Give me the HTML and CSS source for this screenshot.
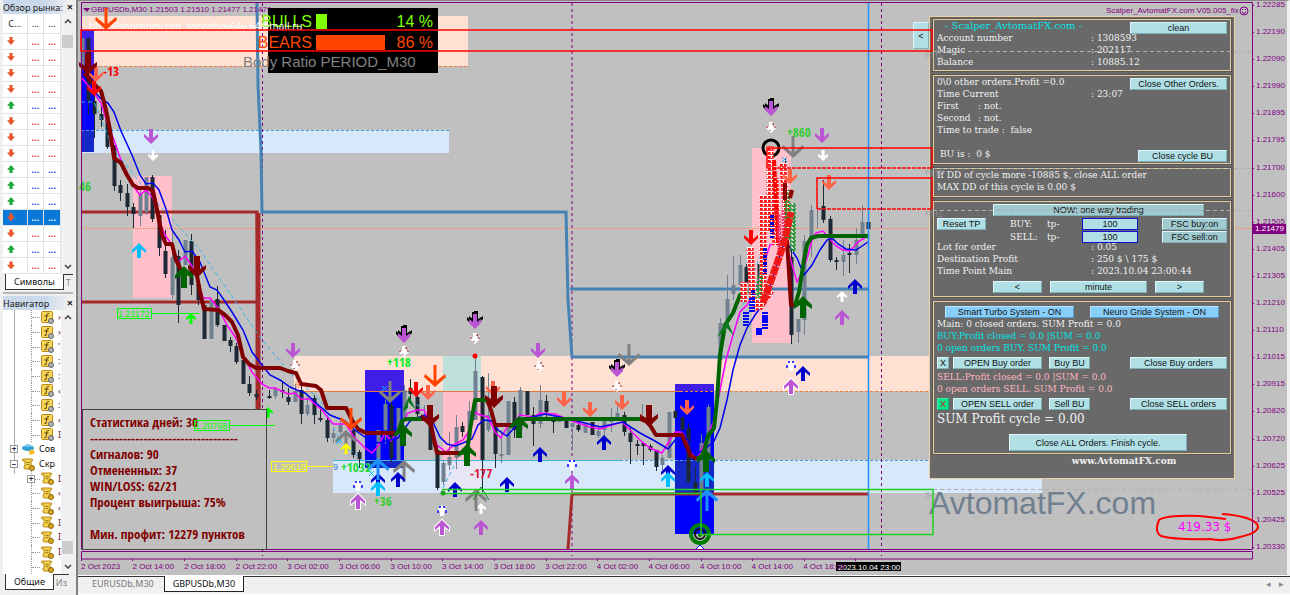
FILE: index.html
```
<!DOCTYPE html>
<html lang="ru">
<head>
<meta charset="utf-8">
<title>GBPUSDb,M30</title>
<link rel="stylesheet" href="styles.css">
</head>
<body>
<svg class="defs" width="0" height="0" aria-hidden="true">
  <defs>
    <path id="up" d="M0 0L7 7V10L2 6V15H-2V6L-7 10V7Z"/>
    <path id="dn" d="M0 0L7 -7V-10L2 -6V-15H-2V-6L-7 -10V-7Z"/>
    <path id="fatup" d="M0 0L9 9V13L3 9V22H-3V9L-9 13V9Z"/>
    <path id="fatdn" d="M0 0L9 -9V-13L3 -9V-22H-3V-9L-9 -13V-9Z"/>
    <path id="bigup" d="M0 0L11 10L10 13L1.500 6V22H-1.500V6L-10 13L-11 10Z"/>
    <path id="bigdn" d="M0 0L11 -10L10 -13L1.500 -6V-22H-1.500V-6L-10 -13L-11 -10Z"/>
    <path id="smup" d="M0 0L5 5V7L1.500 5V11H-1.500V5L-5 7V5Z"/>
    <path id="smdn" d="M0 0L5 -5V-7L1.500 -5V-11H-1.500V-5L-5 -7V-5Z"/>
    <g id="twodn"><use href="#dn" x="1" y="-2" fill="#000"/><use href="#dn" x="-1" y="-1" fill="#000"/><path d="M0 1L6 -5V-9L2 -6V-14H-2V-6L-6 -9V-5Z" fill="#ba55d3"/></g>
    <g id="sparkdn"><path d="M0 0L5 -5V-8L2 -6V-11H-2V-6L-5 -8V-5Z" fill="#fff"/><path d="M-4 -7v2M4 -7v2M-1 -3v1M2 -10v2" stroke="#800000"/></g>
    <g id="sparkup"><path d="M0 0L5 5V8L2 6V11H-2V6L-5 8V5Z" fill="#fff"/><path d="M-2 1v2M2 1v2M-4 5v3M4 5v3" stroke="#00f" stroke-width="1.500"/></g>
    <g id="fn"><rect x=".5" y=".5" width="11" height="11" rx="1" fill="#f6d65a" stroke="#b98a16"/><path d="M8 2.500c-3-.5-2 2-3 7H3.500M3.500 5h4" fill="none" stroke="#5a4000"/><circle cx="10" cy="10" r="2.500" fill="#b0b0b0" stroke="#666"/></g>
    <g id="scroll"><path d="M1 1h9c1 0 1 2 0 2H9v5h2c1 0 1 3 0 3H3c-1 0-1-2-1-3h1V3H1C0 3 0 1 1 1z" fill="#f2cf4e" stroke="#b98a16"/><path d="M4.500 4.500h3M4.500 6.500h3" stroke="#a87b10"/><circle cx="10" cy="10" r="2.500" fill="#d9a520" stroke="#8a6610"/></g>
    <pattern id="hatch" width="4" height="4" patternUnits="userSpaceOnUse"><rect width="4" height="4" fill="#fff"/><path d="M1 0v3M0 1h3M3 2v1" stroke="#f00" stroke-width="1.500"/></pattern>
    <pattern id="hatchgreen" width="4" height="4" patternUnits="userSpaceOnUse"><path d="M0 4L4 0" stroke="#fff"/><path d="M0 2h2v2M3 0v2" fill="none" stroke="#109020" stroke-width="1.500"/></pattern>
  </defs>
</svg>
<div class="terminal">
  <aside class="sidebar">
    <section class="dock market">
      <header class="dock-head"><h2>Обзор рынка:</h2><button class="close" aria-label="Закрыть">×</button></header>
      <div class="dock-body">
        <table class="quotes">
          <thead><tr><th>С...</th><th>...</th><th>...</th></tr></thead>
          <tbody>
            <tr class="down"><td><i></i></td><td>...</td><td>...</td></tr>
            <tr class="down"><td><i></i></td><td>...</td><td>...</td></tr>
            <tr class="down"><td><i></i></td><td>...</td><td>...</td></tr>
            <tr class="down"><td><i></i></td><td>...</td><td>...</td></tr>
            <tr class="rise"><td><i></i></td><td>...</td><td>...</td></tr>
            <tr class="down"><td><i></i></td><td>...</td><td>...</td></tr>
            <tr class="down"><td><i></i></td><td>...</td><td>...</td></tr>
            <tr class="down"><td><i></i></td><td>...</td><td>...</td></tr>
            <tr class="rise"><td><i></i></td><td>...</td><td>...</td></tr>
            <tr class="rise"><td><i></i></td><td>...</td><td>...</td></tr>
            <tr class="rise"><td><i></i></td><td>...</td><td>...</td></tr>
            <tr class="down selected"><td><i></i></td><td>...</td><td>...</td></tr>
            <tr class="down"><td><i></i></td><td>...</td><td>...</td></tr>
            <tr class="rise"><td><i></i></td><td>...</td><td>...</td></tr>
            <tr class="down"><td><i></i></td><td>...</td><td>...</td></tr>
          </tbody>
        </table>
        <div class="scroll top"><svg width="8" height="5"><path d="M1 4l3-3 3 3"/></svg><span class="thumb"></span><svg width="8" height="5"><path d="M1 1l3 3 3-3"/></svg></div>
      </div>
      <nav class="dock-tabs"><a class="on" href="#">Символы</a><a href="#">Т</a></nav>
    </section>
    <section class="dock navigator">
      <header class="dock-head"><h2>Навигатор</h2><button class="close" aria-label="Закрыть">×</button></header>
      <div class="dock-body">
        <ul class="tree">
          <li class="leaf"><svg class="ic"><use href="#fn"/></svg>›</li>
          <li class="leaf"><svg class="ic"><use href="#fn"/></svg>›</li>
          <li class="leaf"><svg class="ic"><use href="#fn"/></svg>'</li>
          <li class="leaf"><svg class="ic"><use href="#fn"/></svg>:</li>
          <li class="leaf"><svg class="ic"><use href="#fn"/></svg>:</li>
          <li class="leaf"><svg class="ic"><use href="#fn"/></svg>‹</li>
          <li class="leaf"><svg class="ic"><use href="#fn"/></svg>:</li>
          <li class="leaf"><svg class="ic"><use href="#fn"/></svg>‹</li>
          <li class="leaf"><svg class="ic"><use href="#fn"/></svg>I</li>
          <li class="node"><b>+</b><svg class="ic"><ellipse cx="6" cy="5" rx="6" ry="3" fill="#2f9fd0"/><path d="M2 4q4-6 8 0z" fill="#6cc8ec"/><path d="M6 7l4 4-2 1z" fill="#f0b000"/><circle cx="10" cy="9" r="2.500" fill="#f0c030"/></svg>Сов</li>
          <li class="node"><b>−</b><svg class="ic"><use href="#scroll"/></svg>Скр</li>
          <li class="leaf sub"><b>+</b><svg class="ic"><use href="#scroll"/></svg>I</li>
          <li class="leaf"><svg class="ic"><use href="#scroll"/></svg>‹</li>
          <li class="leaf"><svg class="ic"><use href="#scroll"/></svg>‹</li>
          <li class="leaf"><svg class="ic"><use href="#scroll"/></svg>I</li>
          <li class="leaf"><svg class="ic"><use href="#scroll"/></svg>I</li>
          <li class="leaf"><svg class="ic"><use href="#scroll"/></svg>I</li>
          <li class="leaf"><svg class="ic"><use href="#scroll"/></svg></li>
        </ul>
        <div class="scroll low"><svg width="8" height="5"><path d="M1 4l3-3 3 3"/></svg><span class="thumb"></span><svg width="8" height="5"><path d="M1 1l3 3 3-3"/></svg></div>
      </div>
      <nav class="dock-tabs"><a class="on" href="#">Общие</a><a href="#">Из</a></nav>
    </section>
  </aside>

  <main class="work">
    <div class="chart">
      <svg class="layer" viewBox="78 0 1212 576" preserveAspectRatio="xMinYMin meet">
        <!-- price zones -->
        <path fill="#ffe1d3" d="M81 16H468V66H81zM294 356H935V391H294z"/>
        <path fill="#d6e8f9" d="M81 130H449V153H81zM333 460H1042V493H333z"/>
        <path fill="#ffc0cb" d="M133 176H172V298H133zM443 391H481V460H443zM752 148H791V343H752z"/>
        <path fill="#bfe0da" d="M443 356H481V391H443z"/>
        <path fill="#e8e6f4" d="M443 460H481V493H443z"/>
        <path fill="#00f" d="M81 30H94V152H81zM365 370H404V468H365zM675 384H714V534H675z"/>
        <path fill="#3f1ee8" d="M81 30H94V66H81zM365 370H404V391H365zM675 384H714V391H675z"/>
        <path fill="#1428c8" d="M81 130H94V152H81zM365 460H404V468H365zM675 460H714V493H675z"/>
        <path stroke="#f58040" stroke-dasharray="3 2" fill="none" d="M94 66.500H468M680 391.500H929"/>
        <path stroke="#e07840" fill="none" d="M294 391.500H680"/>
        <path stroke="#4a9ee0" stroke-dasharray="3 2" fill="none" d="M81 130.500H449M580 460.500H929"/>
        <path stroke="#3cb4e0" fill="none" d="M333 460.500H620"/>
        <path stroke="#800080" stroke-dasharray="3 3" fill="none" d="M262.500 3V556M572 3V556M881.500 3V556"/>
        <path stroke="#f0a080" fill="none" d="M81 228.500H929M1234 228.500H1252"/>
        <!-- channel levels -->
        <path stroke="#4682b4" stroke-width="3" fill="none" d="M257 3L258 86L261 150L262 212H566L568 300L572 357H869M570 289H869"/>
        <path stroke="#a52a2a" stroke-width="3" fill="none" d="M81 212H257L259 409M81 302H257M568 549L572 494H869"/>
        <path stroke="#a52a2a" stroke-width="5" d="M258 213V409"/>
        <!-- candles -->
        <path stroke="#1c2833" fill="none" d="M88.500 38V115M94.500 88V138M101.500 106V127M107.500 118V149M114.500 145V191M120.500 180V201M127.500 184V216M133.500 203V228M152.500 175V222M159.500 212V256M165.500 230V278M178.500 250V323M191.500 234V295M198.500 280V305M217.500 286V327M230.500 337V352M236.500 343V364M249.500 376V396M256.500 390V400M269.500 390V399M282.500 382V398M288.500 388V405M301.500 386V424M314.500 395V424M320.500 407V422M327.500 418V442M353.500 425V458M359.500 450V468M391.500 400V462M410.500 379V400M417.500 395V420M437.500 445V490M462.500 422V437M482.500 376V492M495.500 420V468M514.500 397V438M533.500 407V446M546.500 395V417M553.500 417V433M578.500 420V432M624.500 412V436M630.500 427V464M637.500 440V455M643.500 445V465M650.500 444V452M656.500 450V471M688.500 423V483M695.500 467V492M746.500 264V284M785.500 158V200M791.500 250V344M823.500 180V223M830.500 216V262M836.500 257V270M849.500 244V273"/>
        <path stroke="#1c2833" stroke-width="4" fill="none" d="M88.500 38V101M94.500 101V114M101.500 114V120M107.500 120V147M114.500 145V186M120.500 185V193M127.500 193V207M133.500 207V214M152.500 177V219M159.500 215V248M165.500 251V274M178.500 256V305M191.500 241V285M198.500 284V300M204.500 305V339M217.500 299V325M224.500 325V341M230.500 340V346M236.500 346V362M243.500 360V384M249.500 384V393M256.500 394V397M269.500 396V398M282.500 390V392M288.500 397V402M301.500 390V414M314.500 398V415M320.500 418V420M327.500 420V438M353.500 430V455M359.500 452V459M372.500 462V464M391.500 405V458M410.500 388V394M417.500 397V414M430.500 415V450M437.500 450V488M462.500 426V432M482.500 377V460M495.500 424V454M514.500 402V430M527.500 391V415M533.500 415V424M546.500 401V412M553.500 419V422M566.500 419V428M578.500 425V430M592.500 422V435M624.500 415V432M630.500 433V442M637.500 444V446M643.500 443V446M650.500 446V450M656.500 450V467M675.500 411V418M682.500 417V430M688.500 428V482M695.500 482V492M746.500 267V284M759.500 264V277M791.500 257V335M823.500 206V220M830.500 219V260M836.500 260V262M849.500 253V255M868.500 222V229"/>
        <path stroke="#708090" fill="none" d="M140.500 190V226M146.500 177V215M172.500 232V299M275.500 387V399M295.500 384V402M307.500 395V416M333.500 429V443M340.500 420V434M385.500 400V444M404.500 385V420M424.500 405V420M443.500 460V485M449.500 432V470M456.500 415V469M469.500 401V445M475.500 357V420M488.500 373V432M501.500 430V463M520.500 387V430M540.500 385V428M572.500 423V449M598.500 425V438M604.500 418V440M611.500 408V432M617.500 404V420M642.500 404V415M662.500 455V470M701.500 434V492M708.500 404V460M720.500 318V360M727.500 275V320M733.500 256V300M740.500 255V285M798.500 319V343M804.500 235V335M811.500 205V257M817.500 206V228M843.500 240V276M856.500 228V264M862.500 205V236"/>
        <path stroke="#708090" stroke-width="4" fill="none" d="M82.500 38V67M140.500 193V216M146.500 177V212M172.500 257V295M185.500 240V265M211.500 300V339M275.500 389V396M295.500 391V402M307.500 405V414M333.500 433V438M340.500 425V432M378.500 430V460M385.500 404V430M398.500 408V460M404.500 390V420M443.500 463V482M449.500 457V465M456.500 427V458M469.500 411V440M475.500 371V420M488.500 415V430M501.500 454V456M508.500 401V455M520.500 390V430M540.500 400V424M559.500 418V422M572.500 423V427M585.500 424V433M598.500 431V436M604.500 421V430M611.500 420V422M617.500 413V418M662.500 458V465M669.500 412V458M701.500 443V490M708.500 407V460M720.500 323V360M727.500 299V320M733.500 285V294M740.500 265V285M798.500 319V332M804.500 241V320M811.500 210V240M843.500 255V262M856.500 240V255M862.500 222V235"/>
        <!-- indicators -->
        <path stroke="#30b8e8" stroke-dasharray="4 3" fill="none" d="M81 102H94L114 150L150 195L200 250L262 340L290 373L320 400L340 440L372 470M410 402L424 408M443 488L456 462L467 448M714 420L726 360L733 335L745 300L760 255L770 220"/>
        <path stroke="#f0f" stroke-width="1.500" fill="none" d="M81 77L92 90L101 103L108 125L114 140L121 160L128 178L134 187L140 195L146 190L153 198L159 220L165 235L172 245L178 262L185 256L192 266L198 280L203 298H210L218 308L227 325L236 338L243 355L252 372L262 384L269 388H275L288 394L295 393L301 399H309L322 410L333 424H346L354 437L365 448L372 453L378 446L385 433L391 441L400 428L408 413L417 410H424L428 418L433 430L437 445L446 452L455 444L463 440L470 430L475 412L480 415L488 417L495 432L501 438L508 425L514 423L520 415L534 417L540 413L555 414L572 421L590 427L600 429L612 425L622 422L630 430L640 440L650 448L662 453L670 440L675 432H681L684 435L690 452L697 459L706 440L714 420L720 390L726 360L733 335L740 312L747 305L757 285L770 245L785 240L797 282L803 270L808 255L812 240L816 233L823 231L829 238L836 246L843 250L850 251L858 242L866 237"/>
        <path stroke="#0000f0" stroke-width="1.500" fill="none" d="M92 88L100 98L108 103L114 112L121 131L132 155L140 175L146 184L153 183L159 190L166 209L172 230L179 240L185 252L192 251L200 262L210 287L217 290L224 300L232 312L243 330L252 352L262 365L270 375L280 380L290 387L297 390L305 393L315 402L330 415L345 421L352 428L365 437L378 443L398 438L410 421L424 415L432 420L440 437L447 444L455 446L463 443L472 439L478 425L484 420L492 421L498 430L507 436L514 428L525 419L545 414L560 417L585 423L600 427L623 422L640 433L655 441L668 449L680 434L688 440L696 455L706 448L714 441L720 428L727 400L733 370L740 345L747 328L755 315L766 300L775 270L785 240L797 258L804 275L812 265L820 250L827 240L832 238L838 244L846 249L856 250L868 242"/>
        <g fill="none" stroke-width="4" stroke-linejoin="round">
          <path stroke="#800000" d="M84 73L92 82L101 91L106 110L110 130L114 158L121 163L127 175L133 185L138 188H148L153 191L157 210L162 235L166 244H172L176 260L181 270M196 270L200 292L204 309L218 310L225 315L232 322L238 335L243 357L249 364L256 368H280L288 371L296 373L301 384L316 386L321 390L327 408H346L352 420L358 429L366 433H398M422 419H430L434 440L437 453H462M487 400L491 410L495 425H515M640 419L648 422L656 435H682L686 445L691 456L697 459M785 185L787 240L791 305H795"/>
          <path stroke="#006400" d="M398 433L402 421L406 419H422M462 453L467 452L470 430L475 400H487M515 425L519 420L524 419H640M697 459L703 455L708 436L714 428L717 400L720 355L725 325L733 313L740 295L748 291M795 305L799 292L804 260L807 245L811 238L818 236H869"/>
        </g>
        <!-- dense trade marks around the peak -->
        <circle cx="771" cy="148" r="8" fill="none" stroke="#000" stroke-width="3"/>
        <g fill="none">
          <path stroke="url(#hatch)" stroke-width="7" d="M744.100 282L744 302M750 247L753 300L758 310M763.100 195L763 300M770.100 146L770 232M783 163L788 240"/>
          <path stroke="url(#hatch)" stroke-width="9" d="M758 308L770 290M774 178L777 245"/>
          <path stroke="url(#hatchgreen)" stroke-width="6" d="M793.100 203L793 252M787 190L788 240M760 275L758 298"/>
          <path stroke="#f00" stroke-width="4" stroke-dasharray="6 1 3 1" d="M774 160L778 245"/>
          <path stroke="#00c" stroke-width="4" stroke-dasharray="3 1 1 2" d="M772 215V238M765 248V275M753 290V300"/>
          <path stroke="#00f" stroke-width="6" stroke-dasharray="2 1" d="M746 312V327M765 312V330M752 298V312"/>
          <path stroke="#00f" stroke-width="6" d="M759 328V335M765 317V322"/>
          <path stroke="#f04080" stroke-width="3" stroke-dasharray="2 1" d="M779 215V250M783 210V240"/>
          <path stroke="#f01818" stroke-width="7" stroke-dasharray="9 1" d="M763 303L772 278L784 243L791 212"/>
          <path stroke="#8b0000" stroke-width="4" d="M785 183V200M790 198L792 190"/>
        </g>
        <!-- signal arrows -->
        <g fill="#ba55d3">
          <use href="#dn" x="151" y="144"/><use href="#dn" x="293" y="358"/><use href="#dn" x="538" y="358"/><use href="#dn" x="822" y="143"/>
          <use href="#up" x="481" y="520"/><use href="#up" x="572" y="474"/><use href="#up" x="842" y="310"/>
        </g>
        <g fill="#ba55d3" stroke="#fff" stroke-width="2" paint-order="stroke"><use href="#up" x="358" y="494"/><use href="#up" x="442" y="520"/><use href="#up" x="791" y="379"/></g>
        <use href="#twodn" x="404" y="342"/><use href="#twodn" x="475" y="328"/><use href="#twodn" x="617" y="376"/><use href="#twodn" x="771" y="115"/>
        <g fill="#fff"><use href="#smdn" x="153" y="161"/><use href="#smdn" x="823" y="161"/><use href="#smup" x="481" y="503"/><use href="#smup" x="842" y="291"/></g>
        <use href="#sparkdn" x="295" y="371"/><use href="#sparkdn" x="404" y="357"/><use href="#sparkdn" x="475" y="344"/><use href="#sparkdn" x="539" y="372"/><use href="#sparkdn" x="617" y="392"/><use href="#sparkdn" x="771" y="133"/>
        <use href="#sparkup" x="358" y="480"/><use href="#sparkup" x="442" y="505"/><use href="#sparkup" x="572" y="459"/><use href="#sparkup" x="791" y="360"/>
        <path d="M696 549L700 545L704 549" fill="#fff" stroke="#00f"/>
        <g fill="#ff4500"><use href="#bigdn" x="351" y="430"/><use href="#bigdn" x="435" y="387"/></g>
        <g fill="#808080"><use href="#bigdn" x="390" y="403"/><use href="#bigdn" x="629" y="366"/><use href="#bigdn" x="793" y="158"/><use href="#bigup" x="346" y="430"/><use href="#bigup" x="404" y="460"/><use href="#bigup" x="476" y="489"/></g>
        <g fill="#ff6347"><use href="#dn" x="96" y="82"/><use href="#dn" x="428" y="400"/><use href="#dn" x="493" y="396"/><use href="#dn" x="564" y="407"/><use href="#dn" x="590" y="417"/><use href="#dn" x="622" y="410"/><use href="#dn" x="687" y="415"/><use href="#dn" x="790" y="184"/><use href="#dn" x="829" y="190"/></g>
        <g fill="#f00"><use href="#dn" x="94" y="96"/><use href="#dn" x="416" y="397"/><use href="#dn" x="751" y="245"/></g>
        <g fill="#800000"><use href="#fatdn" x="88" y="75"/><use href="#fatdn" x="197" y="278"/><use href="#fatdn" x="430" y="427"/><use href="#fatdn" x="494" y="408"/><use href="#fatdn" x="649" y="427"/></g>
        <g fill="#006400"><use href="#fatup" x="184" y="266"/><use href="#fatup" x="403" y="424"/><use href="#fatup" x="467" y="444"/><use href="#fatup" x="519" y="416"/><use href="#fatup" x="803" y="296"/><use href="#fatup" x="706" y="450"/></g>
        <path fill="#107820" d="M409 396L402 412L408 408V402L416 410zM727 320L717 337L726 330V327L734 336z"/>
        <path fill="none" stroke="#107820" d="M481 487L473 500M481 487L489 500"/>
        <g fill="#0000cd"><use href="#up" x="378" y="473"/><use href="#up" x="398" y="472"/><use href="#up" x="455" y="482"/><use href="#up" x="507" y="477"/><use href="#up" x="540" y="447"/><use href="#up" x="604" y="435"/><use href="#up" x="668" y="465"/><use href="#up" x="803" y="366"/><use href="#up" x="855" y="279"/></g>
        <g fill="#00bfff"><use href="#up" x="139" y="243"/><use href="#up" x="378" y="481"/><use href="#up" x="668" y="472"/><use href="#up" x="707" y="472"/></g>
        <g fill="#1e90ff"><use href="#bigup" x="378" y="458"/><use href="#bigup" x="707" y="489"/></g>
        <g fill="#0f0"><use href="#smup" x="191" y="313"/><use href="#smup" x="268" y="407"/></g>
        <use href="#smup" x="346" y="443" fill="#ff0"/>
        <path stroke="#00bfff" fill="none" d="M382 386l5 5m-5 0l5-5M336 439l5 5m-5 0l5-5M369 471l5 5m-5 0l5-5M782 157l5 5m-5 0l5-5"/>
        <circle cx="475" cy="356" r="2.500" fill="#f00"/>
        <circle cx="700" cy="534" r="9" fill="none" stroke="#008000" stroke-width="4"/>
        <circle cx="700" cy="534" r="5" fill="none" stroke="#111" stroke-width="2"/>
        <circle cx="700" cy="535" r="2" fill="#008000"/>
        <path stroke="#1e90ff" stroke-width="1.500" d="M868.500 3V549"/>
        <!-- labels -->
        <g class="impact">
          <text x="103" y="76" fill="#f00">-13</text><text x="79" y="191" fill="#32cd32">46</text>
          <text x="387" y="367" fill="#0e2">+118</text><text x="341" y="472" fill="#2d3">+1032</text><text x="374" y="506" fill="#32cd32">+36</text>
          <text x="470" y="478" fill="#dc143c">-177</text><text x="787" y="137" fill="#32cd32">+860</text>
        </g>
        <g class="tag"><text x="333" y="470" fill="#4682b4">9</text><text x="295" y="388" fill="#ff8040">8</text></g>
        <g class="tag">
          <text x="118" y="317" fill="#0f0">1.21172</text><path stroke="#0f0" fill="none" d="M117.500 308.500H151.500V318.500H117.500zM151 313.500H199"/>
          <text x="273" y="470" fill="#ff0">1.20618</text><path stroke="#ff0" fill="none" d="M271.500 461.500H306.500V471.500H271.500zM306 466.500H333"/>
        </g>
        <!-- frames -->
        <path fill="none" stroke="#800080" d="M81.500 549V2.500H1252.500V549.500H81.500M81.500 551.500H1252.500V559H81.500z"/>
        <path fill="none" stroke="#800080" d="M81.500 559v2M132.500 559v2M184.500 559v2M236.500 559v2M287.500 559v2M339.500 559v2M391.500 559v2M442.500 559v2M494.500 559v2M546.500 559v2M597.500 559v2M649.500 559v2M701.500 559v2M752.500 559v2M804.500 559v2M855.500 559v2"/>
        <path fill="#800080" d="M83 8h7l-3 4z"/>
        <text class="small" x="91" y="12">GBPUSDb,M30</text><text class="small" x="149" y="12">1.21503 1.21510 1.21477 1.21479</text>
        <text class="small" x="1106" y="13">Scalper_AvtomatFX.com V05.005_fix</text>
        <g fill="none" stroke="#800080"><circle cx="1244" cy="11" r="4"/><path d="M1242 12q2 3 4 0M1242.500 9v1M1245.500 9v1"/></g>
        <text class="mark" x="929" y="514">AvtomatFX.com</text>
        <text class="profit" x="1178" y="531">419.33 $</text>
        <path fill="none" stroke="#f00" stroke-width="2" d="M1222 514Q1250 516 1257 524Q1262 532 1240 537Q1225 542 1210 539Q1175 540 1161 536Q1154 532 1159 520Q1166 515 1200 516L1226 519"/>
      </svg>

      <dl class="ratio">
        <div class="bulls"><dt>BULLS</dt><dd><span class="bar" style="width:14%"></span></dd><dd>14 %</dd></div>
        <div class="bears"><dt>BEARS</dt><dd><span class="bar" style="width:86%"></span></dd><dd>86 %</dd></div>
        <p>Body Ratio PERIOD_M30</p>
      </dl>

      <section class="stats">
        <p>Статистика дней: 30</p>
        <p>------------------------------------</p>
        <p>Сигналов: 90</p>
        <p>Отмененных: 37</p>
        <p>WIN/LOSS: 62/21</p>
        <p>Процент выигрыша: 75%</p>
        <p class="last">Мин. профит: 12279 пунктов</p>
      </section>

      <section class="expert">
        <button class="btn fold">&lt;</button>
        <div class="box">
          <div class="row head"><h1>- Scalper_AvtomatFX.com -</h1><button class="btn w96">clean</button></div>
          <div class="row pair"><span>Account number</span><span>: 1308593</span></div>
          <div class="row pair"><span>Magic</span><span>: 202117</span></div>
          <div class="row pair"><span>Balance</span><span>: 10885.12</span></div>
        </div>
        <div class="box loose">
          <div class="row head"><span>0\0 other orders.Profit =0.0</span><button class="btn w96">Close Other Orders.</button></div>
          <div class="row pair"><span>Time Current</span><span>: 23:07</span></div>
          <div class="row key"><span>First</span><span>: not.</span></div>
          <div class="row key"><span>Second</span><span>: not.</span></div>
          <div class="row"><span>Time to trade :&nbsp; false</span></div>
          <div class="row"></div>
          <div class="row head"><span class="indent">BU is :&nbsp; 0 $</span><button class="btn w88">Close cycle BU</button></div>
        </div>
        <div class="box loose">
          <div class="row">If DD of cycle more -10885 $, close ALL order</div>
          <div class="row">MAX DD of this cycle is 0.00 $</div>
        </div>
        <div class="box loose">
          <button class="btn now">NOW: one way trading</button>
          <div class="controls">
            <button class="btn">Reset TP</button><label for="tpb">BUY:</label><label for="tpb">tp-</label><input id="tpb" value="100"><button class="btn dim">FSC buy:on</button>
            <label for="tps" class="second">SELL:</label><label for="tps">tp-</label><input id="tps" value="100"><button class="btn dim">FSC sell:on</button>
          </div>
          <div class="row pair"><span>Lot for order</span><span>: 0.05</span></div>
          <div class="row pair"><span>Destination Profit</span><span>: 250 $ \ 175 $</span></div>
          <div class="row pair"><span>Time Point Main</span><span>: 2023.10.04 23:00:44</span></div>
          <div class="stepper"><button class="btn">&lt;</button><button class="btn">minute</button><button class="btn">&gt;</button></div>
        </div>
        <div class="box cycle">
          <div class="systems"><button class="btn blue">Smart Turbo System - ON</button><button class="btn blue">Neuro Gride System - ON</button></div>
          <div class="row">Main: 0 closed orders. SUM Profit = 0.0</div>
          <div class="row aqua">BUY:Profit closed = 0.0 |SUM = 0.0</div>
          <div class="row aqua">0 open orders BUY. SUM Profit = 0.0</div>
          <div class="actions"><button class="btn">X</button><button class="btn">OPEN Buy order</button><button class="btn">Buy BU</button><button class="btn close-all">Close Buy orders</button></div>
          <div class="row rose">SELL:Profit closed = 0.0 |SUM = 0.0</div>
          <div class="row rose">0 open orders SELL. SUM Profit = 0.0</div>
          <div class="actions"><button class="btn live">X</button><button class="btn">OPEN SELL order</button><button class="btn">Sell BU</button><button class="btn close-all">Close SELL orders</button></div>
          <div class="row sum">SUM Profit cycle = 0.00</div>
          <button class="btn finish">Close ALL Orders. Finish cycle.</button>
        </div>
        <p class="site">www.AvtomatFX.com</p>
      </section>

      <svg class="layer over" viewBox="78 0 1212 576" preserveAspectRatio="xMinYMin meet">
        <text class="url" x="89" y="30">http://shorohov.pro</text><text class="url" x="186" y="30">shorohov64y.64@mail.ru</text>
        <use href="#bigdn" x="106" y="30" fill="#ff4500"/>
        <path fill="none" stroke="#f00" stroke-width="1.500" d="M81 30H932V51H81zM932 148H767V168M932 148V168M817 209V178H932V209"/>
        <path fill="none" stroke="#f00" stroke-width="1.500" stroke-dasharray="4 1" d="M767 168H932M817 209H932"/>
        <path fill="none" stroke="#b0b0b0" stroke-dasharray="4 3" d="M933 51.500H1252M933 168.500H1252M933 210.500H1252M933 489.500H1252"/>
        <g class="rh"><text x="925" y="58">RH1</text><text x="925" y="176">RH1</text><text x="925" y="217">RH1</text><text x="925" y="498">S</text></g>
        <path fill="none" stroke="#20d020" stroke-width="1.500" d="M442 489.500H933V534.500H701V489M442 493.500H700"/>
        <circle cx="443" cy="493" r="2.500" fill="#20a020"/>
        <g class="tag"><text x="195" y="429" fill="#0f0">1.20768</text><path stroke="#0f0" fill="none" d="M194.500 420.500H229.500V430.500H194.500zM229 425.500H275"/></g>
        <g class="cursor"><path fill="#000" d="M836 562H901V571H836z"/><text x="838" y="570">2023.10.04 23:00</text></g>
      </svg>

      <ol class="prices">
        <li>1.22285</li><li>1.22190</li><li>1.22090</li><li>1.21990</li><li>1.21895</li><li>1.21795</li><li>1.21700</li><li>1.21600</li><li>1.21505</li><li>1.21405</li><li>1.21305</li><li>1.21210</li><li>1.21110</li><li>1.21015</li><li>1.20915</li><li>1.20820</li><li>1.20720</li><li>1.20625</li><li>1.20525</li><li>1.20425</li><li>1.20330</li>
      </ol>
      <output class="quote">1.21479</output>
      <ol class="times">
        <li>2 Oct 2023</li><li>2 Oct 14:00</li><li>2 Oct 18:00</li><li>2 Oct 22:00</li><li>3 Oct 02:00</li><li>3 Oct 06:00</li><li>3 Oct 10:00</li><li>3 Oct 14:00</li><li>3 Oct 18:00</li><li>3 Oct 22:00</li><li>4 Oct 02:00</li><li>4 Oct 06:00</li><li>4 Oct 10:00</li><li>4 Oct 14:00</li><li>4 Oct 18:00</li>
      </ol>
    </div>
    <nav class="chart-tabs"><a href="#">EURUSDb,M30</a><a class="on" href="#">GBPUSDb,M30</a><span class="arrows"><button aria-label="Назад">◂</button><button aria-label="Вперёд">▸</button></span></nav>
  </main>
</div>
</body>
</html>
```
FILE: styles.css
```
* { box-sizing: border-box; margin: 0; padding: 0; }
body { background: #f0f0f0; font-family: "Noto Sans", "Liberation Sans", sans-serif; font-size: 9px; color: #222; overflow: hidden; }
ul, ol { list-style: none; }
a { color: inherit; text-decoration: none; }
button, input { font: inherit; color: inherit; }
.defs { position: absolute; }
.terminal { display: flex; height: 100vh; }

/* docked panels */
.sidebar { flex: 0 0 78px; width: 78px; min-width: 0; display: flex; flex-direction: column; padding: 0 3px 3px 3px; border-right: 2px solid #808080; }
.dock { display: flex; flex-direction: column; min-height: 0; min-width: 0; }
.market { flex: 294 1 0; border-bottom: 2px solid #b8b8b8; }
.navigator { flex: 298 1 0; padding-top: 2px; }
.dock-head { display: flex; justify-content: space-between; align-items: center; height: 14px; background: linear-gradient(90deg, #c9d9ea 60%, #f0f0f0 95%); }
.dock-head h2 { font-size: 9px; font-weight: 400; line-height: 13px; white-space: nowrap; }
.close { flex: none; border: 0; background: none; font-size: 11px; font-weight: 700; line-height: 12px; }
.dock-body { flex: 1; display: flex; min-height: 0; background: #fff; }
.quotes { flex: 0 0 58px; width: 58px; height: 100%; border-collapse: collapse; table-layout: fixed; line-height: 9px; }
.quotes th, .quotes td { border-right: 1px solid #e2e2e2; border-bottom: 1px solid #e2e2e2; text-align: center; vertical-align: middle; }
.quotes th { font-weight: 400; height: 19px; }
.quotes th:first-child { width: 24px; }
.quotes td { font-weight: 700; }
.quotes i { display: block; width: 8px; height: 8px; margin-left: 4px; background: #e8552a; clip-path: polygon(30% 0, 70% 0, 70% 40%, 100% 40%, 50% 100%, 0 40%, 30% 40%); }
.rise i { background: #1ea83a; transform: rotate(180deg); }
.down { color: #f02020; }
.rise { color: #2020f0; }
.selected { background: #0a78d7; color: #fff; }
.scroll { flex: 0 0 13px; display: flex; flex-direction: column; align-items: center; padding: 5px 0; background: #f0f0f0; }
.scroll path { fill: none; stroke: #444; stroke-width: 1.5; }
.thumb { width: 11px; height: 13px; background: #cdcdcd; }
.top .thumb { margin: 11px 0 auto; }
.low .thumb { margin: auto 0 10px; }
.dock-tabs { flex: 0 0 18px; display: flex; overflow: hidden; color: #888; }
.dock-tabs a { padding: 0 2px; line-height: 15px; height: 16px; border-top: 1px solid #333; }
.dock-tabs .on { flex: none; padding: 0 8px; margin-left: 2px; color: #111; background: #fff; border: 1px solid #333; border-top: 0; }
.tree { flex: 0 0 58px; display: flex; flex-direction: column; overflow: hidden; background: linear-gradient(#aaa, #aaa) 11px 0 / 1px 62% no-repeat; }
.tree li { flex: 1; display: flex; align-items: center; gap: 4px; white-space: nowrap; line-height: 10px; color: #702020; }
.tree .leaf { margin-left: 28px; border-left: 1px dotted #999; padding-left: 9px; gap: 4px; position: relative; }
.leaf::before { content: ""; position: absolute; left: 0; top: 50%; width: 8px; border-top: 1px dotted #999; }
.tree .node { padding-left: 7px; color: #111; font-size: 9px; }
.tree b { flex: none; width: 8px; height: 8px; border: 1px solid #999; background: #fff; color: #224; font-size: 8px; line-height: 6px; text-align: center; }
.sub b { position: absolute; left: -5px; z-index: 1; }
.ic { flex: none; width: 13px; height: 13px; }

/* chart */
.work { flex: 1; min-width: 0; display: flex; flex-direction: column; }
.chart { position: relative; flex: 1; background: #c0c0c0; border-top: 1px solid #888; border-right: 3px solid #f0f0f0; border-bottom: 1px solid #fff; overflow: hidden; color: #800080; }
.layer { position: absolute; left: 0; top: -1px; width: calc(100% + 3px); height: calc(100% + 2px); }
.over { pointer-events: none; }
.small, .prices, .times, .quote, .tag, .cursor { font-family: "Liberation Sans", sans-serif; font-size: 8px; }
.small { fill: #800080; }
.tag { font-size: 9px; }
.cursor text { fill: #fff; }
.impact { font-family: "Liberation Sans Narrow", "Open Sans Condensed", "Liberation Sans", sans-serif; font-size: 13px; font-weight: 700; }
.url { font-size: 10px; fill: #fff; }
.mark { font-family: "Liberation Sans", sans-serif; font-size: 32px; fill: #708090; }
.profit { font-family: "DejaVu Sans", sans-serif; font-size: 12px; fill: #f0f; }
.rh { font-size: 9px; fill: #999; fill-opacity: .7; font-family: "Liberation Sans", sans-serif; }
.prices { position: absolute; top: -1px; right: 0; width: 35px; height: calc(100% - 22px); display: flex; flex-direction: column; justify-content: space-between; }
.prices li { line-height: 10px; padding-left: 4px; position: relative; }
.prices li::before { content: ""; position: absolute; left: 0; top: 5px; width: 2px; border-top: 1px solid #800080; }
.quote { position: absolute; right: 1px; top: 38.9%; width: 33px; line-height: 10px; text-align: center; background: #800080; color: #fff; }
.times { position: absolute; left: 3px; bottom: 3px; width: 64%; display: grid; grid-template-columns: repeat(15, 1fr); line-height: 10px; white-space: nowrap; }

.ratio { position: absolute; left: 190px; top: 7px; width: 170px; height: 65px; background: #000; font: 16px/21px "Liberation Sans", sans-serif; padding-top: 3px; }
.ratio div { display: grid; grid-template-columns: 48px 80px 1fr; padding-right: 5px; margin-left: -8px; text-align: right; }
.ratio dt { margin: 0 -4px 0 -8px; }
.bar { display: block; height: 15px; margin: 3px 0 0 8px; background: currentColor; }
.bulls { color: #7fff00; }
.bears { color: #ff4500; }
.ratio p { margin-left: -25px; color: #808080; white-space: nowrap; font-size: 15px; line-height: 18px; }

.stats { position: absolute; left: 4px; top: 408px; bottom: 25px; width: 185px; padding: 4px 7px; background: #c0c0c0; border: 1px solid #444; color: #800000; font: 700 13px/16px "Liberation Sans Narrow", "Open Sans Condensed", "Liberation Sans", sans-serif; white-space: nowrap; overflow: hidden; }
.stats .last { margin-top: 16px; }

/* trading panel */
.expert { position: absolute; top: 15px; right: 52px; width: 306px; padding: 2px 3px 12px; background: #696969; border: 1px solid #f0d0a0; color: #f2f2f2; font: 9px/12px "DejaVu Serif", serif; display: flex; flex-direction: column; gap: 4px; }
.box { display: flex; flex-direction: column; padding: 0 3px 2px; border: 1px solid #e8cc98; outline: 1px solid #585858; }
.loose { padding-bottom: 3px; }
.row { min-height: 12px; height: 12px; white-space: nowrap; }
.head { display: flex; justify-content: space-between; align-items: center; }
.head .btn { position: relative; margin-top: 3px; }
.head h1 { font: 10px/12px "DejaVu Serif", serif; color: #00e5e5; padding-left: 8px; }
.pair { display: grid; grid-template-columns: 154px 1fr; }
.key { display: grid; grid-template-columns: 41px 1fr; }
.indent { padding-left: 3px; }
.btn { height: 12px; min-height: 12px; border: 1px solid; border-color: #dcf6fa #7fb0b6 #7fb0b6 #dcf6fa; background: #b0e0e6; color: #111; font: 9px/10px "Liberation Sans", sans-serif; text-align: center; white-space: nowrap; overflow: hidden; }
.w96 { width: 97px; }
.w88 { width: 89px; }
.fold { position: absolute; left: -17px; top: 5px; width: 16px; height: 27px; }
.now, .dim { background: #9fcacf; }
.now { width: 211px; margin: 2px 0 0 56px; }
.controls { display: grid; grid-template-columns: 49px 24px 37px 35px 56px 24px 65px; grid-auto-rows: 12px; row-gap: 1px; margin: 2px 0 -2px; }
.controls .btn:first-child { grid-column: 1; }
.controls label { grid-column: 3; }
.controls label + label { grid-column: 4; }
.controls input { grid-column: 5; width: 100%; height: 12px; border: 1px solid #1010d0; background: #b0e0e6; color: #111; font: 9px/10px "Liberation Sans", sans-serif; text-align: center; }
.controls .dim { grid-column: 7; }
.stepper { display: grid; grid-template-columns: 49px 97px 49px; gap: 8px; margin: 4px 0 0 56px; }
.cycle { padding-top: 4px; }
.systems { display: grid; grid-template-columns: 129px 129px; gap: 16px; padding-left: 8px; }
.blue { background: #87cefa; border-color: #b8e4ff #5a9cc8 #5a9cc8 #b8e4ff; }
.aqua { color: #00e5e5; }
.rose { color: #ffb6c1; }
.actions { display: grid; grid-template-columns: 12px 89px 41px 1fr 97px; column-gap: 4px; margin: 3px 0 2px; }
.actions .btn:nth-child(3) { margin: 0 -3px 0 3px; }
.actions .close-all { grid-column: 5; }
.live { background: #00e58a; border-color: #40f0a8 #00b870 #00b870 #40f0a8; color: #c02020; }
.sum { height: 14px; font-size: 12px; line-height: 14px; }
.finish { width: 178px; height: 17px; margin: 8px auto 0 72px; }
.site { font-weight: 700; text-align: center; margin-top: -2px; padding-left: 84px; line-height: 10px; }

.chart-tabs { flex: 0 0 19px; display: flex; align-items: flex-start; border-top: 1px solid #333; color: #777; border-bottom: 2px solid #fafafa; }
.chart-tabs a { padding: 0 10px 0 14px; line-height: 14px; }
.chart-tabs .on { margin-top: -1px; padding: 0 8px; height: 16px; background: #fff; border: 1px solid #222; border-top: 0; color: #111; line-height: 15px; }
.arrows { margin-left: auto; padding-right: 6px; display: flex; gap: 8px; }
.arrows button { border: 0; background: none; font-size: 9px; line-height: 14px; color: #888; }
```
